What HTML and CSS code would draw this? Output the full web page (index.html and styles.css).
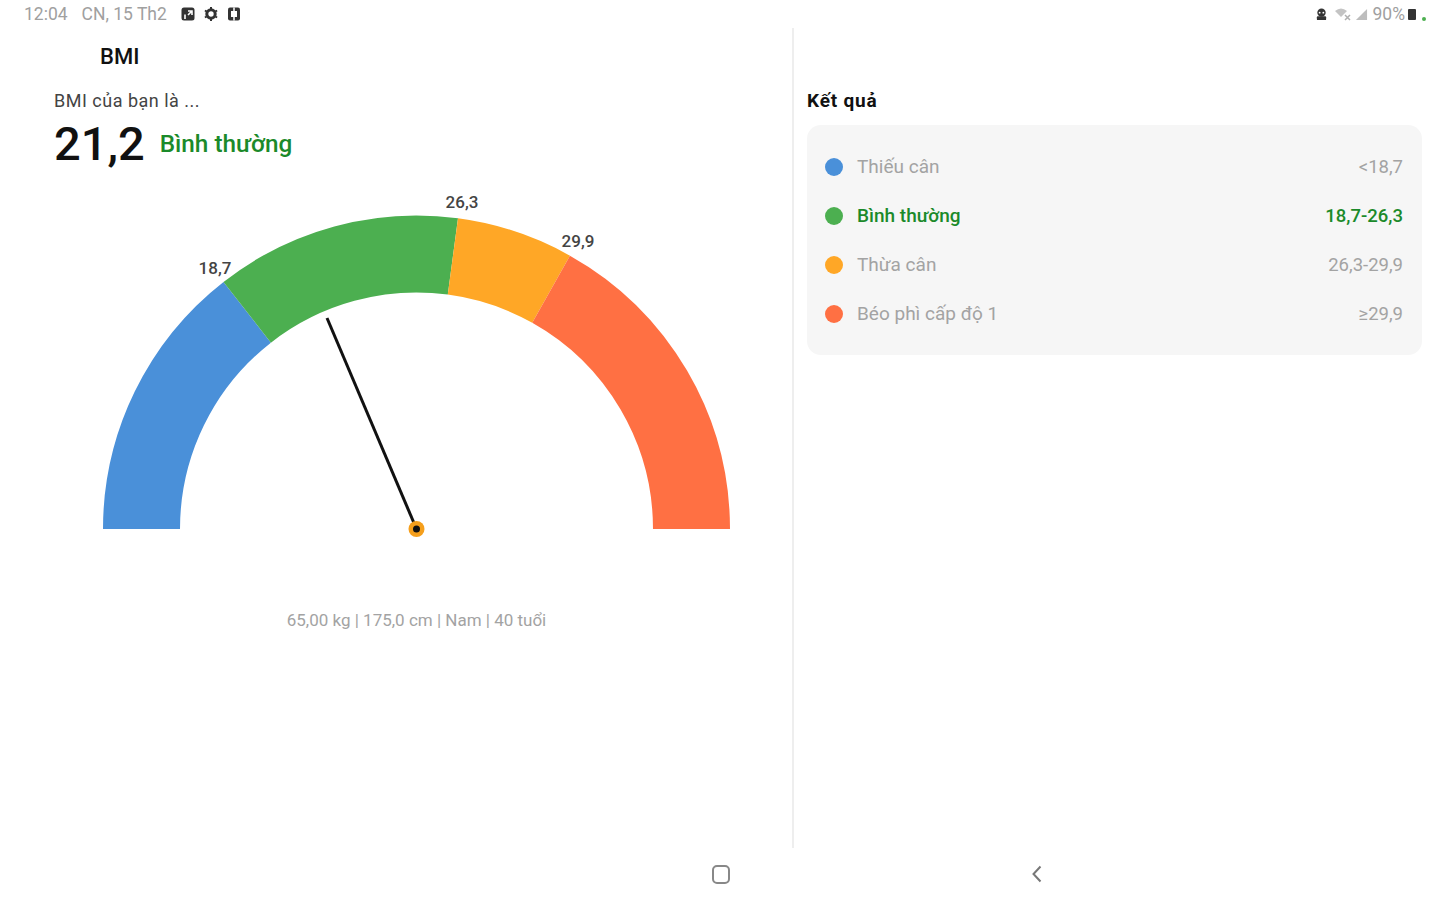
FILE: index.html
```html
<!DOCTYPE html>
<html lang="vi">
<head>
    <meta charset="UTF-8">
    <meta name="viewport" content="width=device-width, initial-scale=1.0">
    <title>BMI</title>
    <link rel="stylesheet" href="styles.css">
</head>
<body>

    <!-- Status bar -->
    <header class="status-bar">
        <div class="status-left">
            <span class="status-time">12:04</span>
            <span class="status-date">CN, 15 Th2</span>
            <svg class="status-icon" viewBox="0 0 16 16"><rect x="1.5" y="1.5" width="13" height="13" rx="2.5" fill="#333"/><path d="M5 8.5 L5 13 M8 5 L12 5 L12 9 M12 5 L8 9" stroke="#fff" stroke-width="1.6" fill="none"/></svg>
            <svg class="status-icon" viewBox="0 0 16 16"><circle cx="8" cy="8" r="4.2" fill="none" stroke="#333" stroke-width="3"/><path d="M8 1 L8 3 M8 13 L8 15 M1.9 4.5 L3.6 5.5 M12.4 10.5 L14.1 11.5 M1.9 11.5 L3.6 10.5 M12.4 5.5 L14.1 4.5" stroke="#333" stroke-width="2"/></svg>
            <svg class="status-icon" viewBox="0 0 16 16"><rect x="2" y="1.5" width="12" height="13" rx="2" fill="#333"/><rect x="5" y="5" width="6" height="6" fill="#fff"/><path d="M8 1.5 L8 5 M8 11 L8 14.5" stroke="#fff" stroke-width="1.5"/></svg>
        </div>
        <div class="status-right">
            <svg class="status-icon small" viewBox="0 0 14 14"><circle cx="7" cy="5" r="4.5" fill="#333"/><rect x="2" y="9" width="10" height="4" rx="1" fill="#333"/><circle cx="5" cy="5" r="1" fill="#fff"/><circle cx="9" cy="5" r="1" fill="#fff"/></svg>
            <svg class="status-icon wifi" viewBox="0 0 18 14"><path d="M1 4 Q7 -1 13 4 L7 10 Z" fill="#c4c4c4"/><path d="M11 8 L16 13 M16 8 L11 13" stroke="#b0b0b0" stroke-width="1.5"/></svg>
            <svg class="status-icon signal" viewBox="0 0 14 14"><path d="M1 13 L13 1 L13 13 Z" fill="#bdbdbd"/></svg>
            <span class="status-battery">90%</span>
            <span class="battery"></span>
            <span class="charge-dot"></span>
        </div>
    </header>

    <main class="content">
        <!-- Gauge side -->
        <section class="gauge-panel">
            <h1 class="page-title">BMI</h1>
            <p class="bmi-caption">BMI của bạn là ...</p>
            <div class="bmi-value">
                <span class="bmi-number">21,2</span>
                <span class="bmi-status">Bình thường</span>
            </div>
            <svg class="gauge" viewBox="0 0 792 400" role="img" aria-label="BMI gauge">
                <g fill="none" stroke-width="77">
                    <path d="M141.5 339 A275 275 0 0 1 247.2 122.3" stroke="#4a90d9"/>
                    <path d="M247.2 122.3 A275 275 0 0 1 452.9 66.4" stroke="#4caf50"/>
                    <path d="M452.9 66.4 A275 275 0 0 1 551.1 99.2" stroke="#ffa726"/>
                    <path d="M551.1 99.2 A275 275 0 0 1 691.5 339" stroke="#ff7043"/>
                </g>
                <g class="gauge-labels" text-anchor="middle">
                    <text x="215" y="84">18,7</text>
                    <text x="462" y="18">26,3</text>
                    <text x="578" y="57">29,9</text>
                </g>
                <line x1="327" y1="128" x2="416.5" y2="339" stroke="#111" stroke-width="3"/>
                <circle cx="416.5" cy="339" r="8" fill="#f59f1c"/>
                <circle cx="416.5" cy="339" r="3.5" fill="#111"/>
            </svg>
            <p class="bmi-details">65,00 kg | 175,0 cm | Nam | 40 tuổi</p>
        </section>

        <!-- Result side -->
        <section class="result-panel">
            <h2 class="result-title">Kết quả</h2>
            <div class="result-card">
                <div class="result-row">
                    <span class="dot dot-blue"></span>
                    <span class="result-name">Thiếu cân</span>
                    <span class="result-range">&lt;18,7</span>
                </div>
                <div class="result-row active">
                    <span class="dot dot-green"></span>
                    <span class="result-name">Bình thường</span>
                    <span class="result-range">18,7-26,3</span>
                </div>
                <div class="result-row">
                    <span class="dot dot-orange"></span>
                    <span class="result-name">Thừa cân</span>
                    <span class="result-range">26,3-29,9</span>
                </div>
                <div class="result-row">
                    <span class="dot dot-red"></span>
                    <span class="result-name">Béo phì cấp độ 1</span>
                    <span class="result-range">≥29,9</span>
                </div>
            </div>
        </section>
    </main>

    <!-- Navigation bar -->
    <footer class="nav-bar">
        <span class="nav-home"></span>
        <svg class="nav-back" viewBox="0 0 14 20"><path d="M10.5 2.5 L3.5 10 L10.5 17.5" fill="none" stroke="#777" stroke-width="2"/></svg>
    </footer>

</body>
</html>
```

FILE: styles.css
```css
* {
    box-sizing: border-box;
}

body {
    font-family: Roboto, "Noto Sans", sans-serif;
    margin: 0;
    width: 1440px;
    height: 900px;
    overflow: hidden;
    display: flex;
    flex-direction: column;
    background-color: #fff;
    color: #111;
}

/* Status bar */
.status-bar {
    height: 28px;
    display: flex;
    justify-content: space-between;
    align-items: center;
    padding: 0 14px 0 24px;
    font-size: 17.5px;
    color: #a0a0a0;
}

.status-left,
.status-right {
    display: flex;
    align-items: center;
}

.status-date {
    margin-left: 14px;
    margin-right: 13px;
}

.status-icon {
    width: 16px;
    height: 16px;
    margin-right: 7px;
}

.status-icon.small {
    width: 13px;
    height: 13px;
    margin-right: 6px;
}

.status-icon.wifi {
    width: 18px;
    height: 14px;
    margin-right: 3px;
}

.status-icon.signal {
    width: 13px;
    height: 13px;
    margin-right: 5px;
}

.status-battery {
    margin-right: 3px;
}

.battery {
    width: 8px;
    height: 11px;
    border-radius: 1px;
    background-color: #333;
    margin-right: 6px;
}

.charge-dot {
    width: 4px;
    height: 4px;
    margin-top: 9px;
    border-radius: 50%;
    background-color: #4caf50;
}

/* Main two panel area */
.content {
    height: 820px;
    display: flex;
}

.gauge-panel {
    width: 792px;
    display: flex;
    flex-direction: column;
}

.page-title {
    margin: 14px 0 0 100px;
    font-size: 22px;
    line-height: 30px;
    font-weight: 500;
}

.bmi-caption {
    margin: 19px 0 0 54px;
    font-size: 18px;
    line-height: 20px;
    letter-spacing: 0.5px;
    color: #444;
}

.bmi-value {
    margin: 5px 0 0 54px;
    height: 54px;
    display: flex;
    align-items: center;
    gap: 15px;
}

.bmi-number {
    font-size: 47px;
    font-weight: 500;
}

.bmi-status {
    font-size: 24.3px;
    font-weight: 500;
    color: #1b8a2a;
}

.gauge {
    width: 792px;
    height: 400px;
    margin-top: 20px;
}

.gauge-labels {
    font-size: 17px;
    font-weight: 500;
    fill: #444;
}

.bmi-details {
    margin: 20px 0 0;
    padding-left: 41px;
    text-align: center;
    font-size: 17px;
    line-height: 20px;
    color: #a3a3a3;
}

.result-panel {
    flex: 1;
    border-left: 2px solid #eee;
    padding: 0 18px 0 13px;
}

.result-title {
    margin: 63px 0 0;
    font-size: 19px;
    line-height: 20px;
    letter-spacing: 0.8px;
    font-weight: 700;
}

.result-card {
    margin-top: 14px;
    padding: 17px 19px 17px 18px;
    background-color: #f6f6f6;
    border-radius: 14px;
}

.result-row {
    height: 49px;
    display: flex;
    align-items: center;
    color: #a3a3a3;
}

.result-row.active {
    color: #1b8a2a;
    font-weight: 500;
}

.dot {
    width: 18px;
    height: 18px;
    border-radius: 50%;
    margin-right: 14px;
}

.dot-blue {
    background-color: #4a90d9;
}

.dot-green {
    background-color: #4caf50;
}

.dot-orange {
    background-color: #ffa726;
}

.dot-red {
    background-color: #ff7043;
}

.result-name {
    flex: 1;
    font-size: 19px;
}

.result-range {
    font-size: 18.5px;
}

/* Navigation bar */
.nav-bar {
    height: 52px;
    display: flex;
    align-items: center;
    padding-left: 712px;
}

.nav-home {
    width: 18px;
    height: 19px;
    border: 2px solid #888;
    border-radius: 5px;
}

.nav-back {
    width: 14px;
    height: 20px;
    margin-left: 300px;
}
```
